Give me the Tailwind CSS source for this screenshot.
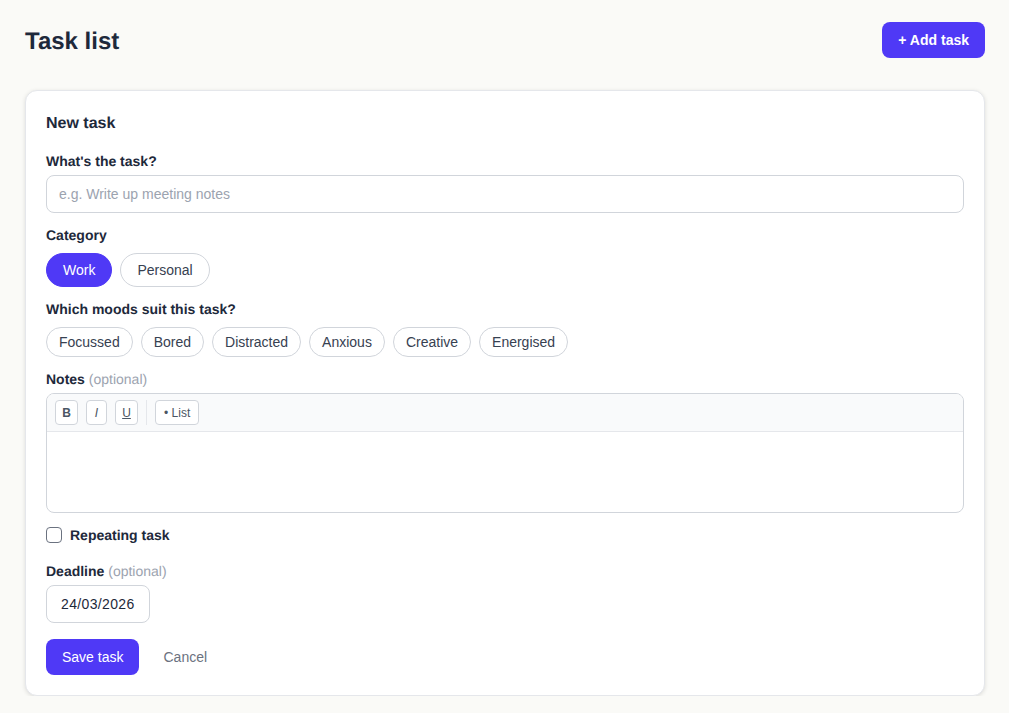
<!DOCTYPE html>
<html lang="en">
<head>
<meta charset="utf-8">
<title>Task list</title>
<script src="https://cdn.jsdelivr.net/npm/@tailwindcss/browser@4"></script>
</head>
<body class="bg-[#fafaf7] font-['Liberation_Sans',sans-serif] text-[#1e293b] antialiased [text-rendering:geometricPrecision]">
<div class="w-[960px] ml-[25px] pt-[22px]">
    <!-- header -->
    <div class="flex items-center justify-between mb-8">
        <h1 class="text-2xl font-bold leading-8 pt-1">Task list</h1>
        <button class="h-9 px-4 rounded-lg bg-[#4f39f6] text-white text-sm font-bold">+ Add task</button>
    </div>

    <!-- form card -->
    <div class="bg-white rounded-xl border border-[#e5e7eb] shadow-[0_1px_4px_rgba(0,0,0,0.12)] px-5 pt-5 pb-5">
        <h2 class="text-base font-bold leading-[22px] pt-0.5 mb-[17px]">New task</h2>

        <label class="block text-sm font-bold leading-[18px] mb-[5px]">What's the task?</label>
        <input type="text" placeholder="e.g. Write up meeting notes" class="block w-full h-[38px] px-3 rounded-lg border border-[#d1d5db] text-sm placeholder:text-[#9ca3af]">

        <label class="block text-sm font-bold leading-[18px] mt-[13px] mb-[9px]">Category</label>
        <div class="flex gap-2">
            <button class="h-[34px] px-4 rounded-full border border-[#4f39f6] bg-[#4f39f6] text-white text-sm">Work</button>
            <button class="h-[34px] px-4 rounded-full border border-[#d1d5db] text-[#374151] text-sm">Personal</button>
        </div>

        <label class="block text-sm font-bold leading-[18px] mt-[13px] mb-[9px]">Which moods suit this task?</label>
        <div class="flex gap-2">
            <button class="h-[30px] px-3 rounded-full border border-[#d1d5db] text-[#374151] text-sm">Focussed</button>
            <button class="h-[30px] px-3 rounded-full border border-[#d1d5db] text-[#374151] text-sm">Bored</button>
            <button class="h-[30px] px-3 rounded-full border border-[#d1d5db] text-[#374151] text-sm">Distracted</button>
            <button class="h-[30px] px-3 rounded-full border border-[#d1d5db] text-[#374151] text-sm">Anxious</button>
            <button class="h-[30px] px-3 rounded-full border border-[#d1d5db] text-[#374151] text-sm">Creative</button>
            <button class="h-[30px] px-3 rounded-full border border-[#d1d5db] text-[#374151] text-sm">Energised</button>
        </div>

        <label class="block text-sm font-bold leading-[18px] mt-[13px] mb-[5px]">Notes <span class="font-normal text-[#9ca3af]">(optional)</span></label>
        <div class="rounded-lg border border-[#d1d5db] overflow-hidden">
            <div class="flex items-center gap-[8px] h-[38px] px-2 bg-[#f9fafb] border-b border-[#e5e7eb]">
                <div class="flex gap-[8px] pr-2 border-r border-[#e5e7eb]">
                    <button class="w-[23px] h-[25px] rounded border border-[#d1d5db] bg-white text-[#4b5563] text-xs font-bold">B</button>
                    <button class="w-[21px] h-[25px] rounded border border-[#d1d5db] bg-white text-[#4b5563] text-xs italic">I</button>
                    <button class="w-[23px] h-[25px] rounded border border-[#d1d5db] bg-white text-[#4b5563] text-xs underline">U</button>
                </div>
                <button class="h-[25px] px-2 rounded border border-[#d1d5db] bg-white text-[#4b5563] text-xs">• List</button>
            </div>
            <div class="h-[80px]"></div>
        </div>

        <label class="flex items-center gap-2 mt-[14px] text-sm font-bold leading-[16px]">
            <input type="checkbox" class="appearance-none w-4 h-4 rounded-[4px] border-[1.5px] border-[#6b7280]">
            Repeating task
        </label>

        <label class="block text-sm font-bold leading-[18px] mt-[19px] mb-[5px]">Deadline <span class="font-normal text-[#9ca3af]">(optional)</span></label>
        <input type="text" value="24/03/2026" class="block w-[104px] h-[38px] px-[14px] rounded-lg border border-[#d1d5db] text-sm tracking-[0.35px]">

        <div class="flex items-center gap-2 mt-4">
            <button class="h-9 px-4 rounded-lg bg-[#4f39f6] text-white text-sm">Save task</button>
            <button class="h-9 px-4 text-[#6b7280] text-sm">Cancel</button>
        </div>
    </div>
</div>
</body>
</html>
